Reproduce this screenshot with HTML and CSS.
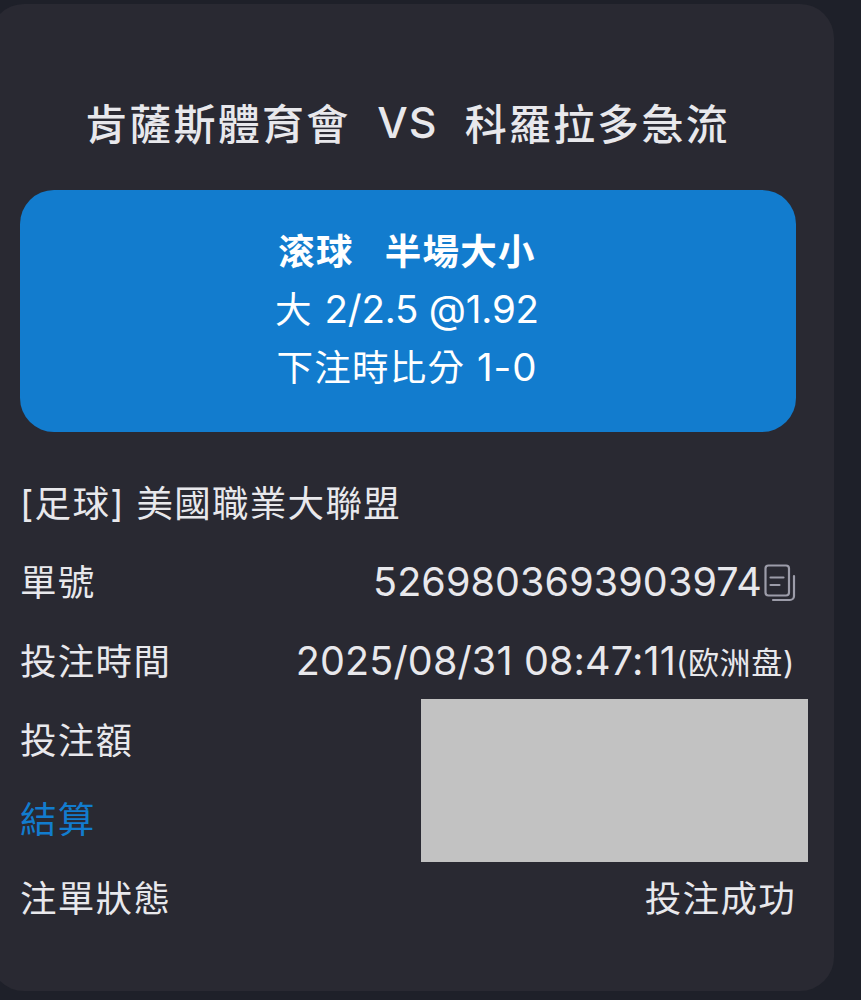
FILE: index.html
```
<!DOCTYPE html>
<html lang="zh-Hant">
<head>
  <meta charset="UTF-8" />
  <meta name="viewport" content="width=device-width, initial-scale=1.0"/>
  <title>注單</title>
  <link rel="stylesheet" href="styles.css">
</head>
<body>
  <main class="ticket">
    <!-- Match title -->
    <h1 class="match">
      <span>肯薩斯體育會</span>
      <span class="vs">VS</span>
      <span>科羅拉多急流</span>
    </h1>

    <!-- Selection box -->
    <section class="bet-box">
      <p class="market"><span>滚球</span><span>半場大小</span></p>
      <p class="line">大 <span class="num">2/2.5 @1.92</span></p>
      <p class="line">下注時比分 <span class="num score">1-0</span></p>
    </section>

    <!-- Bet details -->
    <section class="details">
      <div class="row">
        <span class="league">[足球] 美國職業大聯盟</span>
      </div>
      <div class="row">
        <span>單號</span>
        <span class="value order">
          <span class="num order-no">5269803693903974</span>
          <svg class="copy" width="32" height="38" viewBox="0 0 32 38" fill="none" stroke="#9c9ca9" stroke-width="2.2" stroke-linecap="round">
            <rect x="1.5" y="1.5" width="23.5" height="30" rx="3"/>
            <path d="M6.5 13.5h13M6.5 21h9"/>
            <path d="M30 12v20a4 4 0 0 1-4 4H9"/>
          </svg>
        </span>
      </div>
      <div class="row">
        <span>投注時間</span>
        <span class="value"><span class="num date">2025/08/31 08:47:11</span><span class="odds-type">(欧洲盘)</span></span>
      </div>
      <div class="amounts">
        <div class="row">
          <span>投注額</span>
        </div>
        <div class="row">
          <span class="settle">結算</span>
        </div>
        <div class="mask"></div>
      </div>
      <div class="row">
        <span>注單狀態</span>
        <span class="value">投注成功</span>
      </div>
    </section>
  </main>
</body>
</html>
```
FILE: styles.css
```
* {
  margin: 0;
  padding: 0;
  box-sizing: border-box;
}

body {
  height: 1000px;
  padding-top: 4px;
  background: #1e2029;
  color: #e8e8ec;
  font-family: Inter, "Noto Sans CJK TC", sans-serif;
  font-size: 36.5px;
  letter-spacing: 1.3px;
  overflow: hidden;
}

.ticket {
  width: 844px;
  height: 987px;
  margin-left: -10px;
  padding: 77px 38px 0 30px;
  background: #292932;
  border-radius: 34px;
}

/* Match title */
.match {
  display: flex;
  justify-content: center;
  align-items: center;
  gap: 27px;
  height: 80px;
  padding-right: 1px;
  font-size: 42px;
  font-weight: 500;
  letter-spacing: 2.2px;
  white-space: nowrap;
}
.vs {
  padding-top: 1px;
  font-size: 43px;
  font-weight: 500;
  letter-spacing: 1px;
}

/* Selection box */
.bet-box {
  height: 242px;
  margin-top: 29px;
  padding-top: 33px;
  background: #127cce;
  border-radius: 34px;
  color: #fff;
  text-align: center;
}
.bet-box p {
  height: 58.5px;
  line-height: 58.5px;
  white-space: nowrap;
}
.bet-box .line {
  padding-right: 2px;
  line-height: 55px;
}
.market {
  display: flex;
  justify-content: center;
  gap: 31px;
  padding-right: 2px;
  font-weight: 700;
}
.num {
  font-size: 38.5px;
  letter-spacing: -0.2px;
}
.score {
  letter-spacing: 1px;
}

/* Bet details */
.details {
  margin-top: 30px;
}
.row {
  display: flex;
  justify-content: space-between;
  align-items: center;
  height: 79px;
  white-space: nowrap;
}
.value {
  display: flex;
  align-items: center;
}
.order-no {
  padding-top: 3px;
  margin-right: 2px;
  font-size: 39.5px;
  letter-spacing: 0.1px;
}
.copy {
  margin-top: 5px;
}
.date {
  padding-top: 3px;
  font-size: 39.5px;
  letter-spacing: 0.15px;
}
.odds-type {
  padding-top: 2px;
  margin-right: 1px;
  font-size: 31px;
  letter-spacing: 0.7px;
}
.settle {
  color: #127cce;
}

/* Covers the two amounts */
.amounts {
  position: relative;
}
.mask {
  position: absolute;
  top: 0;
  right: -12px;
  width: 387px;
  height: 163px;
  background: #c2c2c2;
}
```
